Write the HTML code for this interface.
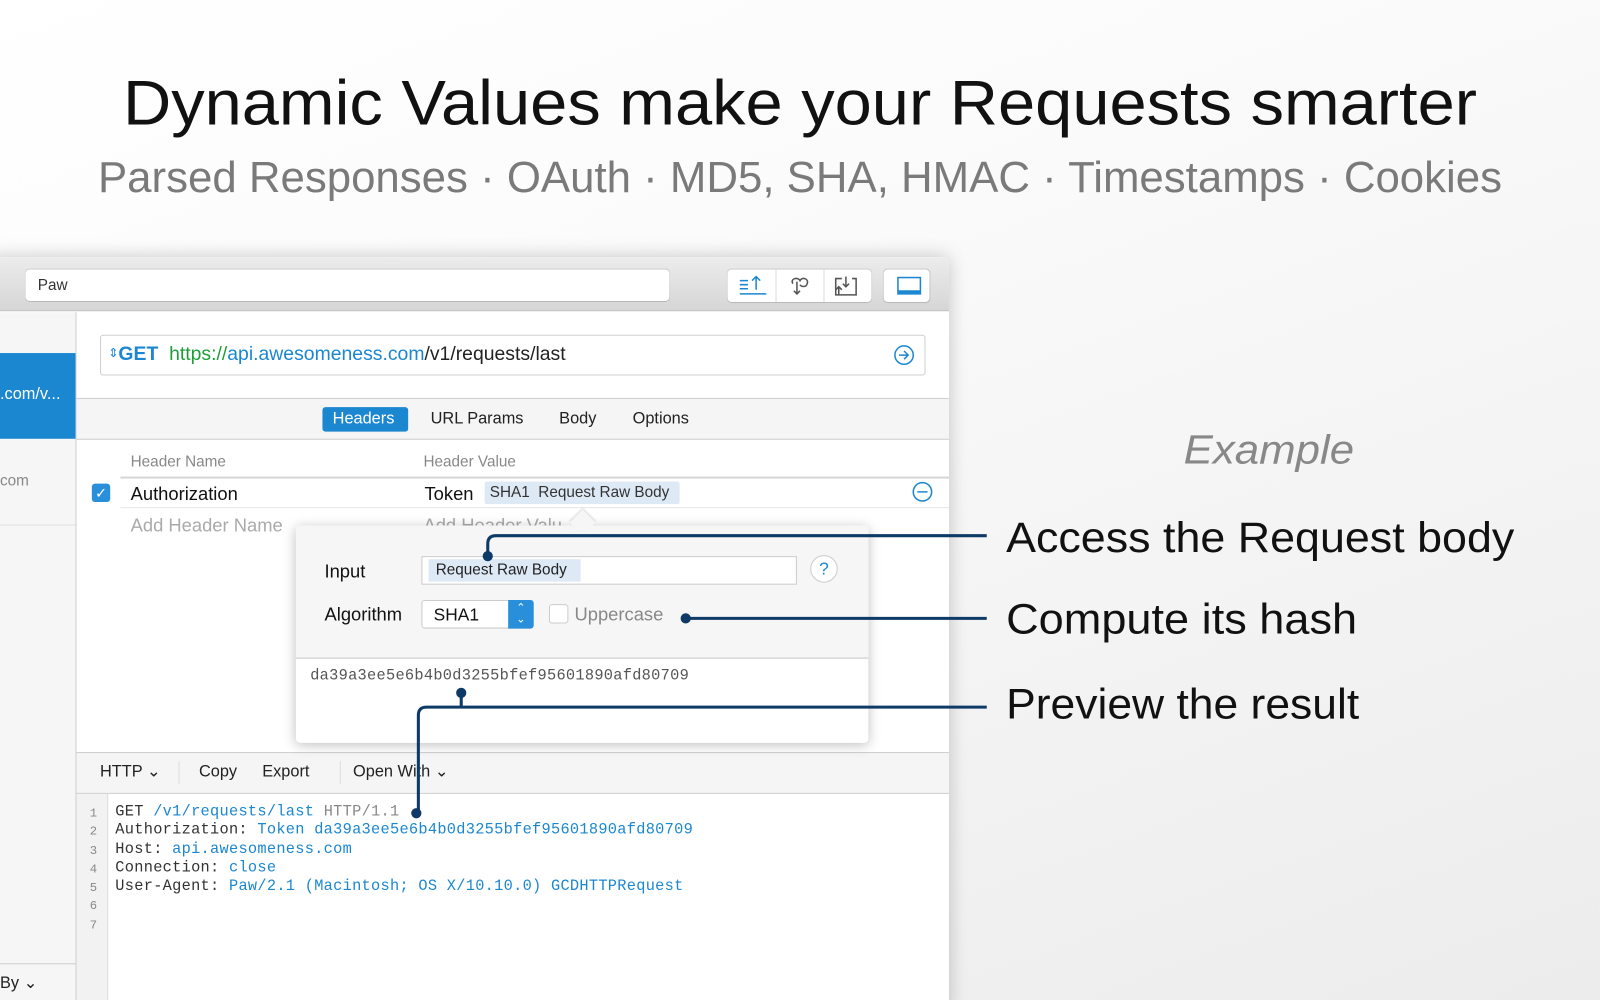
<!DOCTYPE html>
<html><head><meta charset="utf-8"><style>
*{box-sizing:border-box;margin:0;padding:0}
html,body{width:1600px;height:1000px;overflow:hidden}
body{background:linear-gradient(160deg,#ffffff 0%,#fbfbfb 30%,#ececec 100%);font-family:"Liberation Sans",sans-serif;position:relative}
#w{position:absolute;left:0;top:0;width:1568px;height:980px;transform:scale(1.020408);transform-origin:0 0}
.a{position:absolute}
.win{left:-10px;top:252px;width:940px;height:740px;background:#fff;border-radius:6px 6px 0 0;box-shadow:0 0 18px rgba(0,0,0,.22);overflow:hidden}
.tb{left:0;top:0;width:940px;height:53px;background:linear-gradient(#ececec,#d6d6d6);border-bottom:1px solid #bdbdbd}
.sf{background:#fff;border-radius:4px;box-shadow:0 0 1px rgba(0,0,0,.3)}
.t{white-space:nowrap;line-height:1}
.mono{font-family:"Liberation Mono",monospace}
.bl{color:#1b87d1}
</style></head><body><div id="w">
<svg class="a" style="left:0;top:0" width="1568" height="220">
<text x="784" y="122" text-anchor="middle" font-family="Liberation Sans" font-size="62" fill="#111" textLength="1327" lengthAdjust="spacingAndGlyphs">Dynamic Values make your Requests smarter</text>
<text x="784" y="188" text-anchor="middle" font-family="Liberation Sans" font-size="43" fill="#7a7a7a" textLength="1376" lengthAdjust="spacingAndGlyphs">Parsed Responses · OAuth · MD5, SHA, HMAC · Timestamps · Cookies</text>
</svg>

<div class="a win">
 <div class="a tb">
  <div class="a sf" style="left:35px;top:12px;width:631px;height:31px"></div>
  <div class="a t" style="left:47px;top:20px;font-size:15px;color:#333">Paw</div>
  <div class="a sf" style="left:723px;top:12px;width:141px;height:32px"></div>
  <div class="a" style="left:770px;top:12px;width:1px;height:32px;background:#ddd"></div>
  <div class="a" style="left:817px;top:12px;width:1px;height:32px;background:#ddd"></div>
  <div class="a sf" style="left:876px;top:12px;width:45px;height:32px"></div>
  <svg class="a" style="left:723px;top:12px" width="200" height="32" fill="none" stroke-width="1.5">
   <g stroke="#1b87d1"><path d="M12 11h8M12 15h8M12 19h8M12 24h26M28 20V7M24 11l4-4 4 4"/></g>
   <g stroke="#555"><path d="M64 14c-3-5 5-7 7-3 2-4 9-2 7 3-1 4-6 3-7 1M68 12v12M65 21l3 3 3-3"/></g>
   <g stroke="#555"><path d="M112 9h-6v16h20V9h-4M116 7v10M113 14l3 3 3-3M109 25V17M106 20l3-3 3 3"/></g>
   <rect x="167" y="8" width="22" height="16" stroke="#1b87d1"/><path d="M167 22h22" stroke="#1b87d1" stroke-width="3"/>
  </svg>
 </div>
 <div class="a" style="left:0;top:54px;width:85px;height:700px;background:#f6f6f6;border-right:1px solid #cfcfcf"></div>
 <div class="a" style="left:0;top:94px;width:84px;height:84px;background:#1b87d1"></div>
 <div class="a t" style="left:10px;top:127px;color:#fff;font-size:16px">.com/v...</div>
 <div class="a t" style="left:10px;top:212px;color:#888;font-size:15px">com</div>
 <div class="a" style="left:0;top:262px;width:84px;height:1px;background:#ddd"></div>
 <div class="a" style="left:0;top:692px;width:84px;height:1px;background:#ccc"></div>
 <div class="a t" style="left:10px;top:704px;color:#222;font-size:16px">By ⌄</div>
 <div class="a" style="left:108px;top:76px;width:809px;height:40px;border:1px solid #cfcfcf;border-radius:3px"></div>
 <div class="a t" style="left:116px;top:86px;font-size:19px"><span class="bl" style="font-size:12px;vertical-align:3px">⇕</span><b class="bl">GET</b>&nbsp; <span style="color:#1f9d3a">https://</span><span class="bl">api.awesomeness.com</span><span style="color:#222">/v1/requests/last</span></div>
 <svg class="a" style="left:885px;top:86px" width="22" height="22" fill="none" stroke="#1b87d1" stroke-width="1.5"><circle cx="11" cy="10" r="9"/><path d="M6 10h9M11 6l4 4-4 4"/></svg>
 <div class="a" style="left:85px;top:138px;width:855px;height:41px;background:#f5f5f5;border-top:1px solid #cfcfcf;border-bottom:1px solid #cfcfcf"></div>
 <div class="a" style="left:326px;top:147px;width:84px;height:24px;background:#1b87d1;border-radius:3px"></div>
 <div class="a t" style="left:336px;top:151px;color:#fff;font-size:16px">Headers</div>
 <div class="a t" style="left:432px;top:151px;color:#222;font-size:16px">URL Params</div>
 <div class="a t" style="left:558px;top:151px;color:#222;font-size:16px">Body</div>
 <div class="a t" style="left:630px;top:151px;color:#222;font-size:16px">Options</div>
 <div class="a t" style="left:138px;top:193px;color:#888;font-size:15px">Header Name</div>
 <div class="a t" style="left:425px;top:193px;color:#888;font-size:15px">Header Value</div>
 <div class="a" style="left:128px;top:215px;width:812px;height:2px;background:#d6d6d6"></div>
 <div class="a" style="left:100px;top:222px;width:18px;height:18px;background:#2a8fdb;border-radius:3px;color:#fff;font-size:14px;text-align:center;line-height:18px">✓</div>
 <div class="a t" style="left:138px;top:223px;color:#111;font-size:18px">Authorization</div>
 <div class="a t" style="left:426px;top:223px;color:#111;font-size:18px">Token</div>
 <div class="a" style="left:485px;top:220px;width:191px;height:22px;background:#dde9f5;border-radius:2px"></div>
 <div class="a t" style="left:490px;top:223px;color:#333;font-size:15px">SHA1&nbsp; Request Raw Body</div>
 <svg class="a" style="left:904px;top:220px" width="22" height="22" fill="none" stroke="#1b87d1" stroke-width="1.5"><circle cx="10" cy="10" r="9"/><path d="M5 10h10"/></svg>
 <div class="a" style="left:128px;top:245px;width:812px;height:1px;background:#e6e6e6"></div>
 <div class="a t" style="left:138px;top:254px;color:#aaa;font-size:18px">Add Header Name</div>
 <div class="a t" style="left:425px;top:254px;color:#aaa;font-size:18px">Add Header Valu</div>
 <div class="a" style="left:85px;top:485px;width:855px;height:41px;background:#f5f5f5;border-top:1px solid #cfcfcf;border-bottom:1px solid #cfcfcf"></div>
 <div class="a t" style="left:108px;top:497px;color:#222;font-size:16px">HTTP ⌄</div>
 <div class="a" style="left:185px;top:494px;width:1px;height:22px;background:#ddd"></div>
 <div class="a t" style="left:205px;top:497px;color:#222;font-size:16px">Copy</div>
 <div class="a t" style="left:267px;top:497px;color:#222;font-size:16px">Export</div>
 <div class="a" style="left:343px;top:494px;width:1px;height:22px;background:#ddd"></div>
 <div class="a t" style="left:356px;top:497px;color:#222;font-size:16px">Open With ⌄</div>
 <div class="a" style="left:85px;top:526px;width:31px;height:220px;background:#f2f2f2;border-right:1px solid #ddd"></div>
 <div class="a mono" style="left:98px;top:536px;font-size:12px;line-height:18.3px;color:#888">1<br>2<br>3<br>4<br>5<br>6<br>7</div>
 <div class="a mono t" style="left:123px;top:535px;font-size:15px;letter-spacing:.28px;line-height:18.3px;color:#333">GET <span class="bl">/v1/requests/last</span> <span style="color:#888">HTTP/1.1</span><br>Authorization: <span class="bl">Token da39a3ee5e6b4b0d3255bfef95601890afd80709</span><br>Host: <span class="bl">api.awesomeness.com</span><br>Connection: <span class="bl">close</span><br>User-Agent: <span class="bl">Paw/2.1 (Macintosh; OS X/10.10.0) GCDHTTPRequest</span></div>
</div>

<div class="a" style="left:290px;top:515px;width:561px;height:213px;background:#fff;border-radius:4px;box-shadow:0 2px 12px rgba(0,0,0,.25)"></div>
<div class="a" style="left:290px;top:515px;width:561px;height:131px;background:#f6f6f6;border-bottom:2px solid #ddd;border-radius:4px 4px 0 0"></div>
<div class="a" style="left:562px;top:503px;width:18px;height:18px;background:#f6f6f6;transform:rotate(45deg);box-shadow:-1px -1px 2px rgba(0,0,0,.15)"></div>
<div class="a t" style="left:318px;top:551px;color:#111;font-size:18px">Input</div>
<div class="a" style="left:413px;top:545px;width:368px;height:28px;background:#fff;border:1px solid #ccc"></div>
<div class="a" style="left:420px;top:548px;width:149px;height:22px;background:#dde9f5"></div>
<div class="a t" style="left:427px;top:551px;color:#222;font-size:15px">Request Raw Body</div>
<div class="a" style="left:794px;top:544px;width:27px;height:27px;border-radius:50%;background:#fff;border:1px solid #ccc;color:#1b87d1;font-size:17px;text-align:center;line-height:25px">?</div>
<div class="a t" style="left:318px;top:593px;color:#111;font-size:18px">Algorithm</div>
<div class="a" style="left:413px;top:588px;width:110px;height:28px;background:#fff;border:1px solid #ccc;border-radius:3px"></div>
<div class="a" style="left:498px;top:588px;width:25px;height:28px;background:#2a8fdb;border-radius:0 3px 3px 0;color:#fff;font-size:11px;text-align:center;line-height:11px;padding-top:3px">⌃<br>⌄</div>
<div class="a t" style="left:425px;top:594px;color:#111;font-size:17px">SHA1</div>
<div class="a" style="left:538px;top:592px;width:19px;height:19px;background:#fff;border:1px solid #ccc;border-radius:3px"></div>
<div class="a t" style="left:563px;top:593px;color:#888;font-size:18px">Uppercase</div>
<div class="a mono t" style="left:304px;top:655px;color:#555;font-size:15px;letter-spacing:.28px">da39a3ee5e6b4b0d3255bfef95601890afd80709</div>

<svg class="a" style="left:0;top:0" width="1568" height="980" fill="none" stroke="#0d3a66" stroke-width="3">
<path d="M478 545V533q0-8 8-8H967"/>
<path d="M672 606H967"/>
<path d="M452 679V693M967 693H418q-8 0-8 8V797"/>
<g fill="#0d3a66" stroke="none"><circle cx="478" cy="545" r="5"/><circle cx="672" cy="606" r="5"/><circle cx="452" cy="679" r="5"/><circle cx="408" cy="797" r="5"/></g>
<text x="1160" y="454" font-family="Liberation Sans" font-style="italic" font-size="40" fill="#888" stroke="none" textLength="167" lengthAdjust="spacingAndGlyphs">Example</text>
<text x="986" y="541" font-family="Liberation Sans" font-size="42" fill="#111" stroke="none" textLength="498" lengthAdjust="spacingAndGlyphs">Access the Request body</text>
<text x="986" y="621" font-family="Liberation Sans" font-size="42" fill="#111" stroke="none" textLength="344" lengthAdjust="spacingAndGlyphs">Compute its hash</text>
<text x="986" y="704" font-family="Liberation Sans" font-size="42" fill="#111" stroke="none" textLength="346" lengthAdjust="spacingAndGlyphs">Preview the result</text>
</svg>
</div></body></html>
